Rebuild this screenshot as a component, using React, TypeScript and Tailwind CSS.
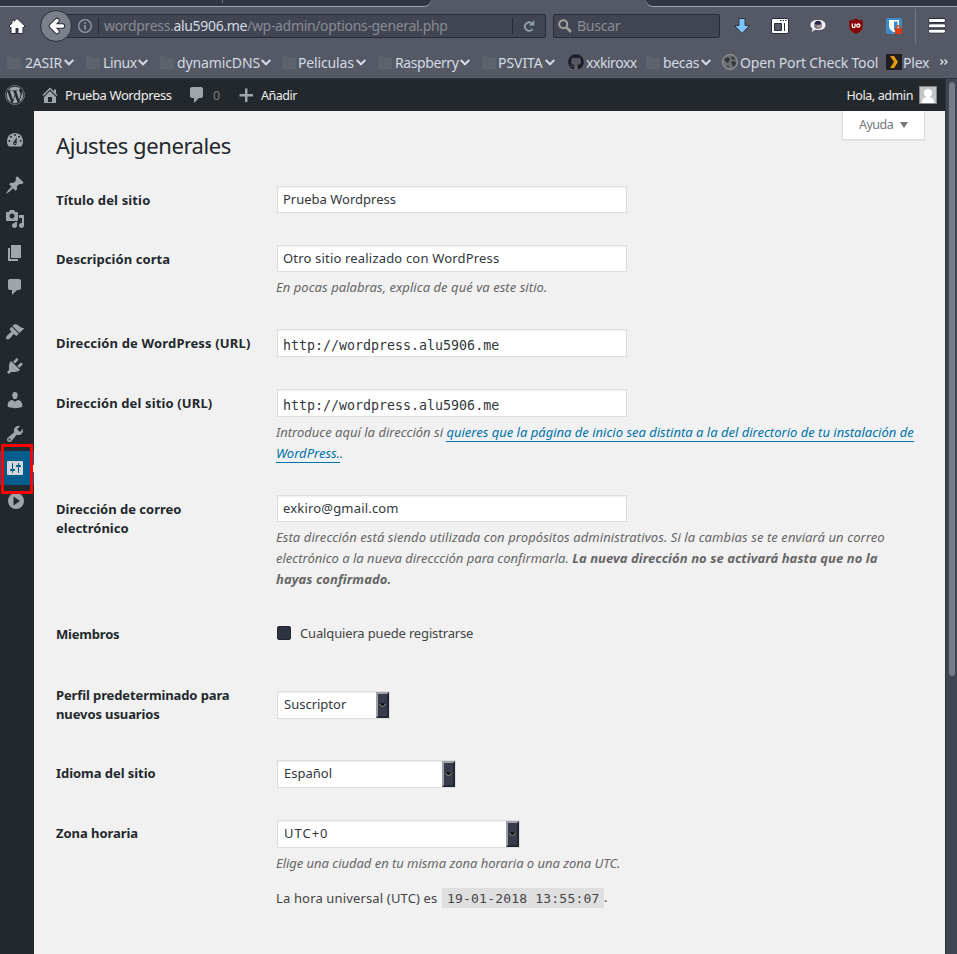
import React from 'react';
import { FaGithub, FaWordpress } from 'react-icons/fa';

const HOME = 'M16 8.5l1.53 1.53-1.06 1.06L10 4.6l-6.47 6.49-1.06-1.06L10 2.5l4 4v-2h2v4zm-6-2.46l6 5.99V18H4v-5.97zM12 17v-5H8v5h4z';
const COMMENT = 'M5 2h9c1.1 0 2 .9 2 2v7c0 1.1-.9 2-2 2h-2l-5 5v-5H5c-1.1 0-2-.9-2-2V4c0-1.1.9-2 2-2z';
const PIN = 'M10.44 3.02l1.82-1.82 6.36 6.35-1.83 1.82c-1.05-.68-2.48-.57-3.41.36l-.75.75c-.92.93-1.04 2.35-.35 3.41l-1.83 1.82-2.41-2.41-2.8 2.79c-.42.42-3.38 2.71-3.8 2.29s1.86-3.39 2.28-3.81l2.79-2.79L4.1 9.36l1.83-1.82c1.05.69 2.48.57 3.4-.36l.75-.75c.93-.92 1.05-2.35.36-3.41z';
const MEDIA = 'M13 11V4c0-.55-.45-1-1-1h-1.67L9 1H5L3.67 3H2c-.55 0-1 .45-1 1v7c0 .55.45 1 1 1h10c.55 0 1-.45 1-1zM7 4.5c1.38 0 2.5 1.12 2.5 2.5S8.38 9.5 7 9.5 4.5 8.38 4.5 7 5.62 4.5 7 4.5zM14 6h5v10.5c0 1.38-1.12 2.5-2.5 2.5S14 17.88 14 16.5s1.12-2.5 2.5-2.5c.17 0 .34.02.5.05V9h-3V6zm-4 8.05V13h2v3.5c0 1.38-1.12 2.5-2.5 2.5S7 17.88 7 16.5 8.12 14 9.5 14c.17 0 .34.02.5.05z';
const PAGE = 'M6 15V2h10v13H6zm-1 1h8v2H3V5h2v11z';
const BRUSH = 'M14.48 11.06L7.41 3.99l1.5-1.5c.5-.56 2.3-.47 3.51.32 1.21.8 1.43 1.28 2.91 2.1 1.18.64 2.45 1.26 4.45.85zm-.71.71L6.7 4.7 4.93 6.47c-.39.39-.39 1.02 0 1.41l1.06 1.06c.39.39.39 1.03 0 1.42-.6.6-1.43 1.11-2.21 1.69-.35.26-.7.53-1.01.84C1.43 14.23.4 16.08 1.4 17.07c.99 1 2.84-.03 4.18-1.36.31-.31.58-.66.85-1.02.57-.78 1.08-1.61 1.69-2.21.39-.39 1.02-.39 1.41 0l1.06 1.06c.39.39 1.02.39 1.41 0z';
const PLUG = 'M13.11 4.36L9.87 7.6 8 5.73l3.24-3.24c.35-.34 1.05-.2 1.56.32.52.51.66 1.21.31 1.55zm-8 1.77l.91-1.12 9.01 9.01-1.19.84c-.71.71-2.63 1.16-3.82 1.16H6.14L4.9 17.26c-.59.59-1.54.59-2.12 0-.59-.58-.59-1.53 0-2.12l1.24-1.24v-3.88c0-1.13.4-3.19 1.09-3.89zm7.26 3.97l3.24-3.24c.34-.35 1.04-.21 1.55.31.52.51.66 1.21.31 1.55l-3.24 3.25z';
const USER = 'M10 9.25c-2.27 0-2.73-3.44-2.73-3.44C7 4.02 7.82 2 9.97 2c2.16 0 2.98 2.02 2.71 3.81 0 0-.41 3.44-2.68 3.44zm0 2.57L12.72 10c2.39 0 4.52 2.33 4.52 4.53v2.49s-3.65 1.13-7.24 1.13c-3.65 0-7.24-1.13-7.24-1.13v-2.49c0-2.25 1.94-4.48 4.47-4.48z';
const WRENCH = 'M16.68 9.77c-1.34 1.34-3.3 1.67-4.95.99l-5.41 6.52c-.99.99-2.59.99-3.58 0s-.99-2.59 0-3.57l6.52-5.42c-.68-1.65-.35-3.61.99-4.95 1.28-1.28 3.12-1.62 4.72-1.06l-2.89 2.89 2.82 2.82 2.86-2.87c.53 1.58.18 3.39-1.08 4.65zM3.81 16.21c.4.39 1.04.39 1.43 0 .4-.4.4-1.04 0-1.43-.39-.4-1.03-.4-1.43 0-.39.39-.39 1.03 0 1.43z';
const SETTINGS = 'M18 16V4c0-.55-.45-1-1-1H3c-.55 0-1 .45-1 1v12c0 .55.45 1 1 1h14c.55 0 1-.45 1-1zM8 11h1c.55 0 1 .45 1 1s-.45 1-1 1H8v1.5c0 .28-.22.5-.5.5s-.5-.22-.5-.5V13H6c-.55 0-1-.45-1-1s.45-1 1-1h1V5.500c0-.28.22-.5.5-.5s.5.22.5.5V11zm5-2h-1c-.55 0-1-.45-1-1s.45-1 1-1h1V5.500c0-.28.22-.5.5-.5s.5.22.5.5V7h1c.55 0 1 .45 1 1s-.45 1-1 1h-1v5.500c0 .28-.22.5-.5.5s-.5-.22-.5-.5V9z';

function Dash({ d, className = '' }: { d: string; className?: string }) {
  return (
    <svg viewBox="0 0 20 20" className={`block h-5 w-5 shrink-0 fill-current ${className}`}>
      <path d={d} />
    </svg>
  );
}

function Gauge() {
  return (
    <svg viewBox="0 0 20 20" className="block h-5 w-5 shrink-0">
      <path d="M3.76 16.5h12.48C17.5 14.9 18 13.2 18 11c0-4.41-3.58-8-8-8s-8 3.59-8 8c0 2.200.5 3.900 1.760 5.500z" fill="#a0a5aa" />
      <g fill="#23282d">
        <circle cx="10" cy="5" r="1" />
        <circle cx="6" cy="6.700" r="1" />
        <circle cx="14" cy="6.700" r="1" />
        <circle cx="4.300" cy="11" r="1" />
        <circle cx="15.700" cy="11" r="1" />
        <path d="M11.800 7.200l-.2 6.600a1.800 1.800 0 1 1-3.200-1.500z" />
      </g>
      <circle cx="9.900" cy="13.500" r=".8" fill="#a0a5aa" />
    </svg>
  );
}

function Chevron() {
  return (
    <svg viewBox="0 0 10 7" className="h-[7px] w-[10px] shrink-0" fill="none" stroke="#d3dae3" strokeWidth="2">
      <path d="M.7 1l4.300 4.300L9.300 1" />
    </svg>
  );
}

function Folder() {
  return (
    <svg viewBox="0 0 14 13" className="h-[13px] w-[14px] shrink-0 fill-[#5e626c]">
      <path d="M0 1q0-1 1-1h4l1.500 2H13q1 0 1 1v9q0 1-1 1H1q-1 0-1-1z" />
    </svg>
  );
}

function Bookmark({ label, width, text }: { label: string; width: string; text: string }) {
  return (
    <div className={`flex h-5 shrink-0 items-center ${width}`}>
      <Folder />
      <span className={`whitespace-nowrap ${text}`}>{label}</span>
      <Chevron />
    </div>
  );
}

function BrowserChrome() {
  return (
    <header className="h-[79px] shrink-0 overflow-hidden border-b border-[#2f323f] bg-[#555965]">
      <div className="flex h-[7px] justify-between">
        <div className="flex h-[7px] w-[431px] rounded-br-[7px] border-b border-[#a4a6ad] bg-[#323644]">
          <div className="ml-[222px] h-[3px] w-px bg-[#777b86]" />
        </div>
        <div className="h-[7px] w-[311px] rounded-bl-[7px] border-b border-[#a4a6ad] bg-[#323644]" />
      </div>

      <div className="flex h-[38px] items-center">
        <svg viewBox="0 0 18 18" className="ml-2 h-[18px] w-[18px] shrink-0">
          <path d="M9 1.500l8 7.500-1.500 1.500L15 10v6.500H3V10l-.5.5L1 9l3-2.800V3h2v1.300z" fill="#fff" stroke="#2c2f3b" />
          <path d="M7.500 16v-5h3v5z" fill="#343745" />
        </svg>
        <div className="relative z-10 ml-[14px] h-8 w-8 shrink-0 rounded-full border border-[#292c38] bg-[#7c808b]">
          <svg viewBox="0 0 30 30" className="h-[30px] w-[30px]">
            <path d="M16 9.500L10.500 15l5.500 5.500M11 15h10.500" fill="none" stroke="#292c38" strokeWidth="5.500" strokeLinecap="round" strokeLinejoin="round" />
            <path d="M16 9.500L10.500 15l5.500 5.500M11 15h10.500" fill="none" stroke="#fff" strokeWidth="3.500" strokeLinecap="round" strokeLinejoin="round" />
          </svg>
        </div>
        <div className="-ml-2 flex h-6 w-[482px] shrink-0 items-center rounded-[2px] border border-[#292c38] bg-[#414551] text-[#878b95]">
          <svg viewBox="0 0 14 14" className="ml-[13px] h-[14px] w-[14px] shrink-0" fill="none" stroke="#989ca5" strokeWidth="1.300">
            <circle cx="7" cy="7" r="6.300" />
            <path d="M7 6v4.500M7 3.300V5" strokeWidth="1.600" />
          </svg>
          <div className="ml-[6px] h-4 w-px bg-[#292c38]" />
          <span className="ml-[5px] whitespace-nowrap text-[14px] leading-5 tracking-[-0.33px]">
            wordpress.<span className="text-[#d3dae3]">alu5906.me</span>/wp-admin/options-general.php
          </span>
          <div className="ml-auto h-4 w-px bg-[#292c38]" />
          <svg viewBox="0 0 14 14" className="mr-[9px] ml-[9px] h-[14px] w-[14px] shrink-0" fill="none" stroke="#8d9faa" strokeWidth="2">
            <path d="M9.300 4A4.200 4.200 0 1 0 10.500 10" />
            <path d="M12.300 1v5.500H6.800z" fill="#8d9faa" stroke="none" />
          </svg>
        </div>
        <div className="ml-[7px] flex h-6 w-[167px] shrink-0 items-center rounded-[2px] border border-[#292c38] bg-[#414551] text-[#898c94]">
          <svg viewBox="0 0 14 14" className="ml-1 h-[14px] w-[14px]" fill="none" stroke="#a3a29e">
            <circle cx="5.300" cy="5.300" r="4" strokeWidth="2" />
            <path d="M8.500 8.500l4.500 4.500" strokeWidth="2.500" />
          </svg>
          <span className="ml-[5px] text-[14px] leading-5 tracking-[-0.25px]">Buscar</span>
        </div>
        <svg viewBox="0 0 16 16" className="ml-[14px] h-4 w-4 shrink-0">
          <path d="M5 .5h6v7h4.500L8 15.500.5 7.500H5z" fill="#7cc4ff" stroke="#30333f" />
        </svg>
        <svg viewBox="0 0 18 16" className="ml-[21px] h-4 w-[18px] shrink-0">
          <rect x=".5" y=".5" width="17" height="15" rx="1.500" fill="#fff" stroke="#292c38" />
          <path d="M3.500 5.500h7v7h-7z" fill="#555965" stroke="#292c38" />
          <path d="M13.500 5v8" stroke="#292c38" />
          <path d="M9 2.500h7" stroke="#292c38" strokeDasharray="1.500 1" />
        </svg>
        <svg viewBox="0 0 16 16" className="ml-[21px] h-4 w-4 shrink-0">
          <path d="M8 2c5 0 7.500 2 7.500 5S13 12 8 12c-1 0-2 0-2.800-.2L1.500 14l1.200-3.300C1.300 9.800.5 8.600.5 7 .5 4 3 2 8 2z" fill="#f2f2f4" />
          <circle cx="8" cy="7" r="4" fill="#74748d" />
          <circle cx="9" cy="8" r="2" fill="#b79a93" />
          <path d="M5 6a3 3 0 0 1 6-.5L9 7z" fill="#25274b" />
        </svg>
        <svg viewBox="0 0 16 16" className="ml-[22px] h-4 w-4 shrink-0">
          <path d="M8 .5c2 1.300 4 1.900 6.700 2v5C14.700 12 12 14.200 8 15.800 4 14.200 1.300 12 1.300 7.500v-5C4 2.400 6 1.800 8 .5z" fill="#850000" />
          <path d="M4.300 5.500v2.700a1.400 1.400 0 0 0 2.800 0V5.500" fill="none" stroke="#fff" strokeWidth="1.300" />
          <circle cx="10.300" cy="7.600" r="1.600" fill="none" stroke="#fff" strokeWidth="1.300" />
        </svg>
        <svg viewBox="0 0 16 16" className="ml-[22px] h-4 w-4 shrink-0">
          <rect width="16" height="16" rx="2" fill="#3c8dc5" />
          <path d="M3 2h10v6c0 3-2.500 5-5 6.300C5.500 13 3 11 3 8z" fill="#fff" />
          <path d="M8 3.500h3.500v4.200c0 2-1.500 3.400-3.500 4.600z" fill="#3c8dc5" />
          <path d="M9 10.500h7V16H9z" fill="#dd3b0d" />
          <path d="M10.800 11V9.300a1.700 1.700 0 0 1 3.400 0V11" fill="none" stroke="#dd3b0d" strokeWidth="1.300" />
        </svg>
        <div className="ml-[13px] h-[34px] w-px bg-[#747883]" />
        <svg viewBox="0 0 18 16" className="ml-[12px] h-4 w-[18px] shrink-0">
          <g fill="#fff" stroke="#292c38">
            <rect x=".5" y=".5" width="17" height="4" rx="1.500" />
            <rect x=".5" y="5.800" width="17" height="4" rx="1.500" />
            <rect x=".5" y="11.200" width="17" height="4" rx="1.500" />
          </g>
        </svg>
      </div>

      <nav className="flex h-[34px] items-center pl-[7px] text-[14px] text-[#d3dae3]">
        <Bookmark label="2ASIR" width="w-[79px]" text="ml-1 mr-[2px] tracking-[-0.25px]" />
        <Bookmark label="Linux" width="w-[74px]" text="ml-[3px] mr-px tracking-[-0.35px]" />
        <Bookmark label="dynamicDNS" width="w-[122px]" text="ml-[3px] mr-px tracking-[-0.12px]" />
        <Bookmark label="Peliculas" width="w-[96px]" text="ml-[2px] mr-[2px] tracking-[-0.15px]" />
        <Bookmark label="Raspberry" width="w-[104px]" text="ml-[3px] mr-px tracking-[-0.4px]" />
        <Bookmark label="PSVITA" width="w-[86px]" text="ml-[2px] mr-[2px] tracking-[-0.05px]" />
        <div className="flex w-[78px] shrink-0 items-center">
          <FaGithub className="h-4 w-4 shrink-0 text-[#1b1f23]" />
          <span className="ml-[2px] tracking-[-0.45px]">xxkiroxx</span>
        </div>
        <Bookmark label="becas" width="w-[76px]" text="ml-[3px] mr-[2px] tracking-[-0.35px]" />
        <div className="flex w-[164px] shrink-0 items-center">
          <svg viewBox="0 0 16 16" className="h-4 w-4 shrink-0">
            <circle cx="8" cy="8" r="7.500" fill="#6e7072" stroke="#999" />
            <path d="M2 5l4-2 2 2-2 4-2-1zM9 2l4 2-1 2-2-1zM9 8l4-1 1 3-3 3-1-3zM5 11l2 1-1 2z" fill="#333638" />
          </svg>
          <span className="ml-[2px] whitespace-nowrap tracking-[-0.18px]">Open Port Check Tool</span>
        </div>
        <svg viewBox="0 0 16 16" className="h-4 w-4 shrink-0">
          <path d="M0 0h16v16H0z" fill="#1f1f1f" />
          <path d="M4 2h4l4 6-4 6H4l4-6z" fill="#e89a0d" />
        </svg>
        <span className="ml-[1px] w-[37px] tracking-[-0.2px]">Plex</span>
        <svg viewBox="0 0 8 6" className="h-[6px] w-2" fill="none" stroke="#e4e8ee" strokeWidth="1.300">
          <path d="M.5.500L3 3 .5 5.500M4.500.500L7 3 4.500 5.500" />
        </svg>
      </nav>
    </header>
  );
}

function Row({ label, height, spacing = '', children }: { label: React.ReactNode; height: string; spacing?: string; children: React.ReactNode }) {
  return (
    <div className={`flex shrink-0 ${height}`}>
      <div className={`w-[221px] shrink-0 pt-[5px] text-[13px] font-bold leading-[19px] text-[#23282d] ${spacing}`}>{label}</div>
      <div className="min-w-0 flex-1">{children}</div>
    </div>
  );
}

function Field({ value, mono = false, spacing = '' }: { value: string; mono?: boolean; spacing?: string }) {
  return (
    <div
      className={`flex w-[350px] items-center border border-[#ddd] bg-white pl-[5px] text-[#32373c] shadow-[inset_0_1px_2px_rgba(0,0,0,0.07)] ${
        mono ? "h-7 pt-[5px] font-['DejaVu_Sans_Mono',monospace] text-[13.300px]" : 'h-[27px] text-[13px]'
      } ${spacing}`}
    >
      {value}
    </div>
  );
}

function Select({ value, width, spacing = '' }: { value: string; width: string; spacing?: string }) {
  return (
    <div className={`flex h-7 items-center border border-[#ddd] bg-white pl-[6px] text-[13px] text-[#32373c] shadow-[inset_0_1px_2px_rgba(0,0,0,0.07)] ${width}`}>
      <span className={`flex-1 ${spacing}`}>{value}</span>
      <span className="flex h-[26px] w-[13px] items-center justify-center border-2 border-t-[#a0a1a8] border-r-[#242735] border-b-[#242735] border-l-[#a0a1a8] bg-[#383c4a]">
        <svg viewBox="0 0 7 5" className="h-[5px] w-[7px] shrink-0">
          <path d="M0 .5h7L3.500 4z" fill="#000" />
          <path d="M0 .5l3.500 3.500L7 .5" fill="none" stroke="#c4c4c4" strokeWidth=".8" />
        </svg>
      </span>
    </div>
  );
}

const note = '-ml-px text-[13px] italic leading-[21px] text-[#666]';
const link = 'border-b border-[#0073aa] text-[#0073aa]';

function Sidebar() {
  return (
    <aside className="w-[34px] shrink-0 bg-[#23282d] pt-3 text-[#a0a5aa]">
      <div className="flex h-[45px] pt-[7px] pl-[5px]"><Gauge /></div>
      {[PIN, MEDIA, PAGE, COMMENT].map((d) => (
        <div key={d} className="flex h-[34px] pt-[7px] pl-[5px]"><Dash d={d} /></div>
      ))}
      <div className="h-[11px]" />
      {[BRUSH, PLUG, USER, WRENCH].map((d) => (
        <div key={d} className="flex h-[34px] pt-[7px] pl-[5px]"><Dash d={d} /></div>
      ))}
      <div className="relative flex h-[34px] bg-[#005d8c] pt-[7px] pl-[5px] text-[#d3d6d9]">
        <Dash d={SETTINGS} />
        <div className="absolute -top-[7px] left-px h-[50px] w-8 border-[3px] border-[#f00]" />
        <div className="absolute top-[14px] right-0 h-[7px] w-px bg-[#f1f1f1]" />
      </div>
      <div className="flex pt-[6px] pl-[6px]">
        <svg viewBox="0 0 20 20" className="h-5 w-5">
          <circle cx="10" cy="10" r="8" fill="#a0a5aa" />
          <path d="M7.500 5.500l6.500 4.500-6.500 4.500z" fill="#23282d" />
        </svg>
      </div>
    </aside>
  );
}

function AdminBar() {
  return (
    <div className="flex h-8 shrink-0 items-center bg-[#23282d] text-[13px] text-[#eee]">
      <FaWordpress className="ml-[5px] h-5 w-5 shrink-0 text-[#a0a5aa]" />
      <Dash d={HOME} className="ml-[15px] text-[#a0a5aa]" />
      <span className="ml-[5px] w-[107px] whitespace-nowrap pt-[2px] tracking-[-0.4px]">Prueba Wordpress</span>
      <Dash d={COMMENT} className="ml-[15px] text-[#a0a5aa]" />
      <span className="ml-[6px] w-[9px] pt-[2px] text-[12.500px] text-[#9ea3a8] opacity-70">0</span>
      <svg viewBox="0 0 20 20" className="ml-[14px] h-5 w-5 fill-[#a0a5aa]">
        <path d="M17 9v2.500h-5.500V17H9v-5.500H3.500V9H9V3.500h2.500V9z" />
      </svg>
      <span className="ml-[5px] pt-[2px] text-[12.500px] tracking-[-0.5px]">Añadir</span>
      <span className="mr-[6px] ml-auto pt-[2px] text-[12.500px] tracking-[-0.4px]">Hola, admin</span>
      <svg viewBox="0 0 18 18" className="mr-2 h-[18px] w-[18px]">
        <rect x=".5" y=".5" width="17" height="17" fill="#c5c5c5" stroke="#82878c" />
        <circle cx="9" cy="7" r="4" fill="#fff" />
        <path d="M3 17c0-4 2-6 6-6s6 2 6 6z" fill="#fff" />
      </svg>
    </div>
  );
}

export default function App() {
  return (
    <div className="flex h-[954px] w-[957px] flex-col overflow-hidden bg-[#f1f1f1] font-['Noto_Sans','Open_Sans',sans-serif]">
      <BrowserChrome />
      <div className="flex min-h-0 flex-1">
        <div className="flex w-[945px] shrink-0 flex-col">
          <AdminBar />
          <div className="flex min-h-0 flex-1">
            <Sidebar />
            <main className="relative flex-1 pt-[20px] pl-[22px]">
              <div className="absolute top-0 right-5 flex h-[29px] w-[83px] items-center border border-t-0 border-[#ddd] bg-white pl-4 text-[12.500px] text-[#72777c] shadow-[0_1px_1px_rgba(0,0,0,0.04)]">
                <span className="w-[34px] pt-px tracking-[-0.5px]">Ayuda</span>
                <svg viewBox="0 0 8 6" className="ml-[7px] h-[6px] w-2 fill-[#72777c]">
                  <path d="M0 0h8L4 6z" />
                </svg>
              </div>
              <h1 className="h-[55px] whitespace-nowrap text-[22px] leading-[29px] tracking-[-0.42px] text-[#23282d]">Ajustes generales</h1>

              <Row label="Título del sitio" height="h-[59px]" spacing="tracking-[0.14px]"><Field value="Prueba Wordpress" /></Row>
              <Row label="Descripción corta" height="h-[84px]" spacing="tracking-[0.06px]">
                <Field value="Otro sitio realizado con WordPress" spacing="tracking-[0.18px]" />
                <p className={`mt-[5px] tracking-[0.05px] ${note}`}>En pocas palabras, explica de qué va este sitio.</p>
              </Row>
              <Row label="Dirección de WordPress (URL)" height="h-[60px]" spacing="tracking-[0.17px]"><Field mono value="http://wordpress.alu5906.me" /></Row>
              <Row label="Dirección del sitio (URL)" height="h-[106px]" spacing="tracking-[0.13px]">
                <Field mono value="http://wordpress.alu5906.me" />
                <p className={`mt-[5px] whitespace-nowrap ${note}`}>
                  Introduce aquí la dirección si{' '}
                  <a className={link}>
                    quieres que la página de inicio sea distinta a la del directorio de tu instalación de
                    <br />
                    WordPress.
                  </a>
                  .
                </p>
              </Row>
              <Row label={<>Dirección de correo<br />electrónico</>} height="h-[125px]">
                <Field value="exkiro@gmail.com" spacing="tracking-[0.18px]" />
                <p className={`mt-[5px] whitespace-nowrap ${note}`}>
                  <span className="tracking-[0.08px]">Esta dirección está siendo utilizada con propósitos administrativos. Si la cambias se te enviará un correo</span>
                  <br />
                  electrónico a la nueva direccción para confirmarla.{' '}
                  <b className="tracking-[0.07px]">La nueva dirección no se activará hasta que no la
                  <br />
                  hayas confirmado.</b>
                </p>
              </Row>
              <Row label="Miembros" height="h-[61px]" spacing="tracking-[-0.2px]">
                <div className="flex items-center pt-[3px] text-[13px] leading-[20px] tracking-[-0.15px] text-[#444]">
                  <span className="mr-[9px] h-[14px] w-[14px] rounded-[2px] border border-[#23262f] bg-[#2e3340]" />
                  Cualquiera puede registrarse
                </div>
              </Row>
              <Row label={<>Perfil predeterminado para<br />nuevos usuarios</>} height="h-[78px]" spacing="tracking-[-0.11px]">
                <div className="pt-[10px]"><Select value="Suscriptor" width="w-[113px]" /></div>
              </Row>
              <Row label="Idioma del sitio" height="h-[60px]" spacing="tracking-[-0.05px]">
                <div className="pt-px"><Select value="Español" width="w-[179px]" /></div>
              </Row>
              <Row label="Zona horaria" height="h-[120px]" spacing="tracking-[-0.05px]">
                <div className="pt-px"><Select value="UTC+0" width="w-[243px]" spacing="tracking-[1px]" /></div>
                <p className={`mt-[5px] tracking-[-0.03px] ${note}`}>Elige una ciudad en tu misma zona horaria o una zona UTC.</p>
                <p className="mt-[14px] -ml-px flex h-5 items-center text-[13px] text-[#444]">
                  <span className="w-[162px] pt-px tracking-[0.15px]">La hora universal (UTC) es</span>
                  <code className="ml-1 flex h-5 w-[162px] items-center whitespace-nowrap bg-[#dfdfdf] pt-px pl-[5px] font-['DejaVu_Sans_Mono',monospace] text-[13px] tracking-[0.2px]">19-01-2018 13:55:07</code>
                  .
                </p>
              </Row>
            </main>
          </div>
        </div>
        <div className="w-3 shrink-0 border-l border-[#2c303b] bg-[#404552] pt-[3px] pl-[3px]">
          <div className="h-[594px] w-[6px] rounded-full bg-[#767b87]" />
        </div>
      </div>
    </div>
  );
}
